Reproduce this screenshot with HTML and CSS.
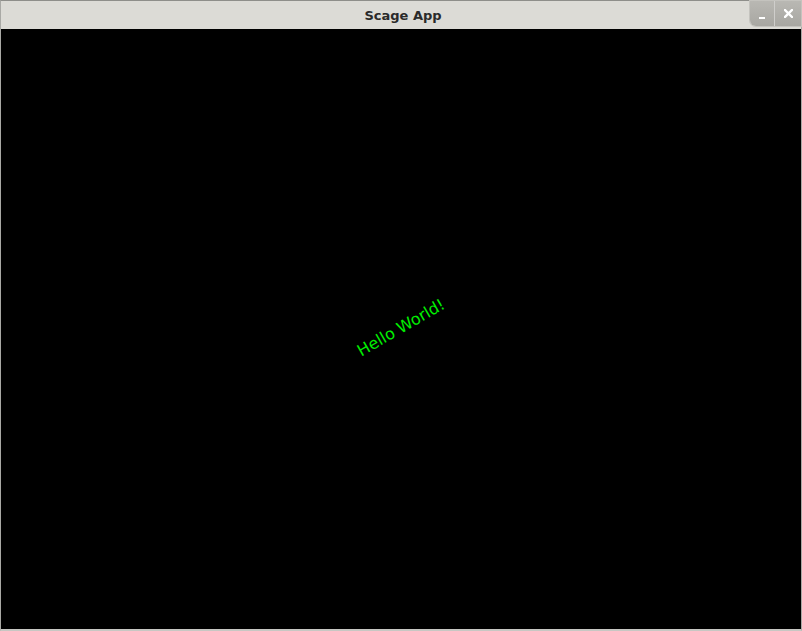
FILE: index.html
```html
<!DOCTYPE html>
<html>
<head>
<meta charset="utf-8">
<link rel="stylesheet" href="styles.css">
</head>
<body>
<div class="window">
  <div class="titlebar">
    <span class="title">Scage App</span>
    <div class="controls">
      <div class="btn btn-min"><span class="min-glyph"></span></div>
      <div class="btn btn-close">
        <svg width="9" height="9" viewBox="0 0 9 9"><path d="M1 1 L8 8 M8 1 L1 8" stroke="#fff" stroke-width="2.4" stroke-linecap="square"/></svg>
      </div>
    </div>
  </div>
  <div class="canvas">
    <span class="hello">Hello World!</span>
  </div>
</div>
</body>
</html>
```
FILE: styles.css
```css
html, body {
  margin: 0;
  padding: 0;
  background: #000;
}
.window {
  width: 802px;
  height: 631px;
  display: flex;
  flex-direction: column;
  box-sizing: border-box;
  border-top: 1px solid #8e8e8a;
  border-left: 1px solid #a9a9a5;
  border-right: 1px solid #a9a9a5;
  border-bottom: 2px solid #c7c7c3;
  background: #000;
}
.titlebar {
  height: 28px;
  flex: none;
  background: #dcdbd6;
  position: relative;
  display: flex;
  align-items: center;
  justify-content: center;
}
.title {
  font-family: "DejaVu Sans", sans-serif;
  font-weight: bold;
  font-size: 13px;
  color: #2a2a2a;
  margin-top: 1px;
  margin-left: 4px;
}
.controls {
  position: absolute;
  right: 0;
  top: 0;
  height: 25px;
  display: flex;
  border-bottom-left-radius: 6px;
  overflow: hidden;
  box-shadow: 0 0 0 1px #c4c3be;
}
.btn {
  width: 24px;
  height: 25px;
  background: linear-gradient(#b9b8b3, #a8a7a2);
  display: flex;
  align-items: center;
  justify-content: center;
}
.btn-min {
  border-right: 1px solid #cfcecb;
}
.btn-close {
  width: 26px;
}
.min-glyph {
  width: 6px;
  height: 2px;
  background: #fff;
  margin-top: 8px;
}
.canvas {
  flex: 1;
  background: #000;
  display: flex;
  align-items: center;
  justify-content: center;
}
.hello {
  font-family: "DejaVu Sans", sans-serif;
  font-size: 16px;
  color: #00f000;
  transform: translate(0px, -2px) rotate(-30deg);
  display: inline-block;
}
```
